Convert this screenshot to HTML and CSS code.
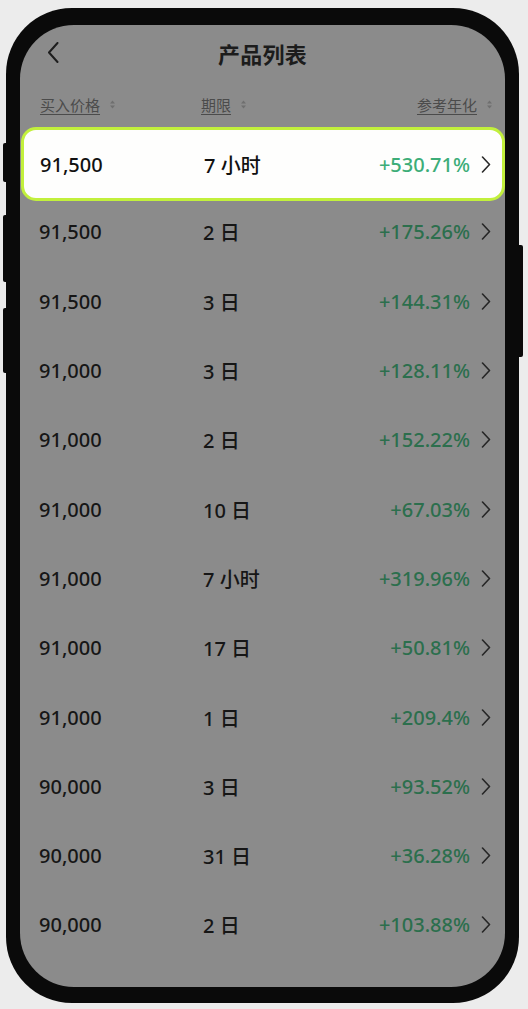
FILE: index.html
```html
<!DOCTYPE html>
<html lang="zh-CN">
<head>
<meta charset="utf-8">
<title>产品列表</title>
<link rel="stylesheet" href="styles.css">
</head>
<body>
<div class="stage">
  <div class="phone">
    <span class="btn btn-l1"></span>
    <span class="btn btn-l2"></span>
    <span class="btn btn-l3"></span>
    <span class="btn btn-r1"></span>
    <div class="screen">
      <div class="nav">
        <svg class="back" width="12" height="21" viewBox="0 0 12 21"><polyline points="10.5,1 2,10.5 10.5,20" fill="none" stroke="#1e1e1e" stroke-width="2" stroke-linecap="round" stroke-linejoin="round"/></svg>
        <div class="title">产品列表</div>
      </div>
      <div class="cols">
        <div class="col col-price"><span class="col-label">买入价格</span><svg class="sort" width="5" height="9" viewBox="0 0 5 9"><path d="M0 3.6 L2.5 0.4 L5 3.6 Z M0 5.4 L2.5 8.6 L5 5.4 Z" fill="#6f6f6f"/></svg></div>
        <div class="col col-term"><span class="col-label">期限</span><svg class="sort" width="5" height="9" viewBox="0 0 5 9"><path d="M0 3.6 L2.5 0.4 L5 3.6 Z M0 5.4 L2.5 8.6 L5 5.4 Z" fill="#6f6f6f"/></svg></div>
        <div class="col col-rate"><span class="col-label">参考年化</span><svg class="sort" width="5" height="9" viewBox="0 0 5 9"><path d="M0 3.6 L2.5 0.4 L5 3.6 Z M0 5.4 L2.5 8.6 L5 5.4 Z" fill="#6f6f6f"/></svg></div>
      </div>
      <div class="list">
        <div class="row row-active"><span class="price">91,500</span><span class="term">7 小时</span><span class="rate">+530.71%</span><svg class="chev" width="10" height="17" viewBox="0 0 10 17"><polyline points="1.5,1 8.5,8.5 1.5,16" fill="none" stroke="#2a2a2a" stroke-width="1.6" stroke-linecap="round" stroke-linejoin="round"/></svg></div>
        <div class="row"><span class="price">91,500</span><span class="term">2 日</span><span class="rate">+175.26%</span><svg class="chev" width="10" height="17" viewBox="0 0 10 17"><polyline points="1.5,1 8.5,8.5 1.5,16" fill="none" stroke="#262626" stroke-width="1.6" stroke-linecap="round" stroke-linejoin="round"/></svg></div>
        <div class="row"><span class="price">91,500</span><span class="term">3 日</span><span class="rate">+144.31%</span><svg class="chev" width="10" height="17" viewBox="0 0 10 17"><polyline points="1.5,1 8.5,8.5 1.5,16" fill="none" stroke="#262626" stroke-width="1.6" stroke-linecap="round" stroke-linejoin="round"/></svg></div>
        <div class="row"><span class="price">91,000</span><span class="term">3 日</span><span class="rate">+128.11%</span><svg class="chev" width="10" height="17" viewBox="0 0 10 17"><polyline points="1.5,1 8.5,8.5 1.5,16" fill="none" stroke="#262626" stroke-width="1.6" stroke-linecap="round" stroke-linejoin="round"/></svg></div>
        <div class="row"><span class="price">91,000</span><span class="term">2 日</span><span class="rate">+152.22%</span><svg class="chev" width="10" height="17" viewBox="0 0 10 17"><polyline points="1.5,1 8.5,8.5 1.5,16" fill="none" stroke="#262626" stroke-width="1.6" stroke-linecap="round" stroke-linejoin="round"/></svg></div>
        <div class="row"><span class="price">91,000</span><span class="term">10 日</span><span class="rate">+67.03%</span><svg class="chev" width="10" height="17" viewBox="0 0 10 17"><polyline points="1.5,1 8.5,8.5 1.5,16" fill="none" stroke="#262626" stroke-width="1.6" stroke-linecap="round" stroke-linejoin="round"/></svg></div>
        <div class="row"><span class="price">91,000</span><span class="term">7 小时</span><span class="rate">+319.96%</span><svg class="chev" width="10" height="17" viewBox="0 0 10 17"><polyline points="1.5,1 8.5,8.5 1.5,16" fill="none" stroke="#262626" stroke-width="1.6" stroke-linecap="round" stroke-linejoin="round"/></svg></div>
        <div class="row"><span class="price">91,000</span><span class="term">17 日</span><span class="rate">+50.81%</span><svg class="chev" width="10" height="17" viewBox="0 0 10 17"><polyline points="1.5,1 8.5,8.5 1.5,16" fill="none" stroke="#262626" stroke-width="1.6" stroke-linecap="round" stroke-linejoin="round"/></svg></div>
        <div class="row"><span class="price">91,000</span><span class="term">1 日</span><span class="rate">+209.4%</span><svg class="chev" width="10" height="17" viewBox="0 0 10 17"><polyline points="1.5,1 8.5,8.5 1.5,16" fill="none" stroke="#262626" stroke-width="1.6" stroke-linecap="round" stroke-linejoin="round"/></svg></div>
        <div class="row"><span class="price">90,000</span><span class="term">3 日</span><span class="rate">+93.52%</span><svg class="chev" width="10" height="17" viewBox="0 0 10 17"><polyline points="1.5,1 8.5,8.5 1.5,16" fill="none" stroke="#262626" stroke-width="1.6" stroke-linecap="round" stroke-linejoin="round"/></svg></div>
        <div class="row"><span class="price">90,000</span><span class="term">31 日</span><span class="rate">+36.28%</span><svg class="chev" width="10" height="17" viewBox="0 0 10 17"><polyline points="1.5,1 8.5,8.5 1.5,16" fill="none" stroke="#262626" stroke-width="1.6" stroke-linecap="round" stroke-linejoin="round"/></svg></div>
        <div class="row"><span class="price">90,000</span><span class="term">2 日</span><span class="rate">+103.88%</span><svg class="chev" width="10" height="17" viewBox="0 0 10 17"><polyline points="1.5,1 8.5,8.5 1.5,16" fill="none" stroke="#262626" stroke-width="1.6" stroke-linecap="round" stroke-linejoin="round"/></svg></div>
      </div>
    </div>
  </div>
</div>
</body>
</html>
```

FILE: styles.css
```css
html, body {
  margin: 0;
  padding: 0;
  background: #ececec;
}
body {
  font-family: "Noto Sans", "Noto Sans CJK SC", sans-serif;
  color: #161616;
}
.stage {
  width: 528px;
  height: 1009px;
  padding: 8px 0 0 6px;
  box-sizing: border-box;
}
.phone {
  position: relative;
  width: 513px;
  height: 995px;
  box-sizing: border-box;
  padding: 17px 14px 16px 14px;
  background: #0a0a0a;
  border-radius: 66px;
}
.btn {
  position: absolute;
  width: 6px;
  background: #0a0a0a;
  border-radius: 2px;
}
.btn-l1 { left: -3px; top: 135px; height: 39px; }
.btn-l2 { left: -3px; top: 207px; height: 67px; }
.btn-l3 { left: -3px; top: 300px; height: 65px; }
.btn-r1 { right: -4px; top: 237px; height: 112px; }
.screen {
  height: 100%;
  background: #8b8b8b;
  border-radius: 54px;
  overflow: hidden;
  display: flex;
  flex-direction: column;
}
.nav {
  height: 55px;
  display: flex;
  align-items: center;
  justify-content: center;
  position: relative;
}
.back {
  position: absolute;
  left: 27px;
  top: 17px;
}
.title {
  font-size: 22px;
  font-weight: 700;
  color: #1c1c1c;
  letter-spacing: 0.2px;
}
.cols {
  height: 48px;
  display: flex;
  align-items: center;
  padding: 0 13px 0 20px;
  font-size: 15px;
  color: #4b4b4b;
}
.col {
  display: flex;
  align-items: center;
  gap: 10px;
}
.col-price { width: 161px; }
.col-term { flex: 1; }
.col-label {
  text-decoration: underline;
  text-decoration-color: #4b4b4b;
  text-underline-offset: 3px;
  text-decoration-thickness: 1px;
}
.sort { display: block; }
.list {
  display: flex;
  flex-direction: column;
}
.row {
  height: 69.3px;
  flex: none;
  box-sizing: border-box;
  display: grid;
  grid-template-columns: 164px 1fr auto 10px;
  column-gap: 0;
  align-items: center;
  padding: 0 14px 0 19px;
  font-size: 20px;
  font-weight: 500;
  color: #161616;
}
.row-active {
  height: 74px;
  margin: -1px 0 -3.7px 1px;
  padding-left: 16px;
  padding-right: 11px;
  background: #fefefd;
  border: 3px solid #c2f03c;
  border-radius: 15px;
  color: #111;
}
.rate {
  color: #2c6f4d;
  margin-right: 11px;
}
.row-active .rate {
  color: #3cad78;
}
.chev { display: block; }
```
